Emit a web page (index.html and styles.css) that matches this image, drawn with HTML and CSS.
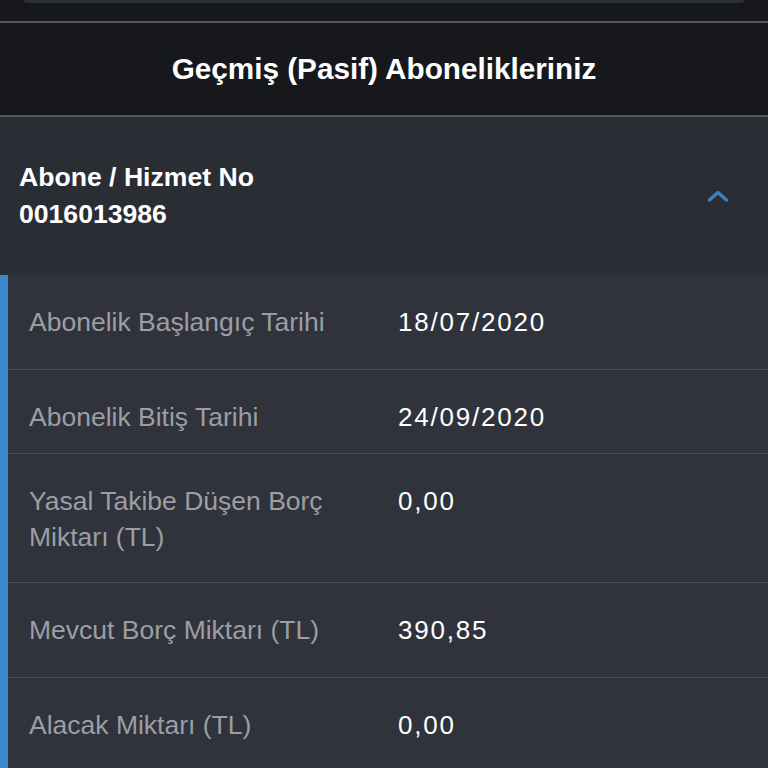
FILE: index.html
```html
<!DOCTYPE html>
<html lang="tr">
<head>
    <meta charset="UTF-8">
    <meta name="viewport" content="width=device-width, initial-scale=1.0">
    <title>Geçmiş Abonelikler</title>
    <link rel="stylesheet" href="styles.css">
</head>
<body>
    <div class="top-area">
        <div class="top-card"></div>
    </div>
    <h1 class="page-title">Geçmiş (Pasif) Abonelikleriniz</h1>
    <div class="sub-header">
        <div class="sub-info">
            <div>Abone / Hizmet No</div>
            <div>0016013986</div>
        </div>
        <svg class="chevron" width="24" height="16" viewBox="0 0 24 16">
            <path d="M3.5 13 L12 5.5 L20.5 13" fill="none" stroke="#3b7fc2" stroke-width="3.5" stroke-linecap="round" stroke-linejoin="round"/>
        </svg>
    </div>
    <div class="details">
        <div class="row">
            <div class="label">Abonelik Başlangıç Tarihi</div>
            <div class="value">18/07/2020</div>
        </div>
        <div class="row short">
            <div class="label">Abonelik Bitiş Tarihi</div>
            <div class="value">24/09/2020</div>
        </div>
        <div class="row tall">
            <div class="label">Yasal Takibe Düşen Borç Miktarı (TL)</div>
            <div class="value">0,00</div>
        </div>
        <div class="row">
            <div class="label">Mevcut Borç Miktarı (TL)</div>
            <div class="value">390,85</div>
        </div>
        <div class="row">
            <div class="label">Alacak Miktarı (TL)</div>
            <div class="value">0,00</div>
        </div>
    </div>
</body>
</html>
```

FILE: styles.css
```css
body { margin: 0; background: #17181c; font-family: "Liberation Sans", Arial, sans-serif; color: #fff; }
.top-area { height: 21px; border-bottom: 2px solid #55575c; overflow: hidden; }
.top-card { height: 3px; margin: 0 24px; background: #2c2f37; border-radius: 0 0 8px 8px; box-shadow: 0 7px 8px #121827; }
.page-title { margin: 0; height: 92px; display: flex; align-items: center; justify-content: center; font-size: 29.7px; font-weight: bold; border-bottom: 2px solid #53565c; }
.sub-header { height: 158px; background: #2a2d34; display: flex; align-items: center; justify-content: space-between; padding: 0 38px 0 19px; }
.sub-info { font-size: 26.6px; font-weight: bold; line-height: 37px; }
.chevron { display: block; margin-top: -2px; }
.details { background: #30333b; border-left: 8px solid #3b87c9; }
.row { display: grid; grid-template-columns: 340px 1fr; column-gap: 29px; padding: 29px 16px 29px 21px; border-bottom: 1px solid #474a52; line-height: 36px; }
.row.short { padding-bottom: 18px; }
.row.tall { padding-bottom: 27px; }
.row:last-child { border-bottom: none; }
.label { font-size: 26.5px; color: #9c9ea4; }
.value { font-size: 26px; letter-spacing: 1.8px; color: #fff; }
```
